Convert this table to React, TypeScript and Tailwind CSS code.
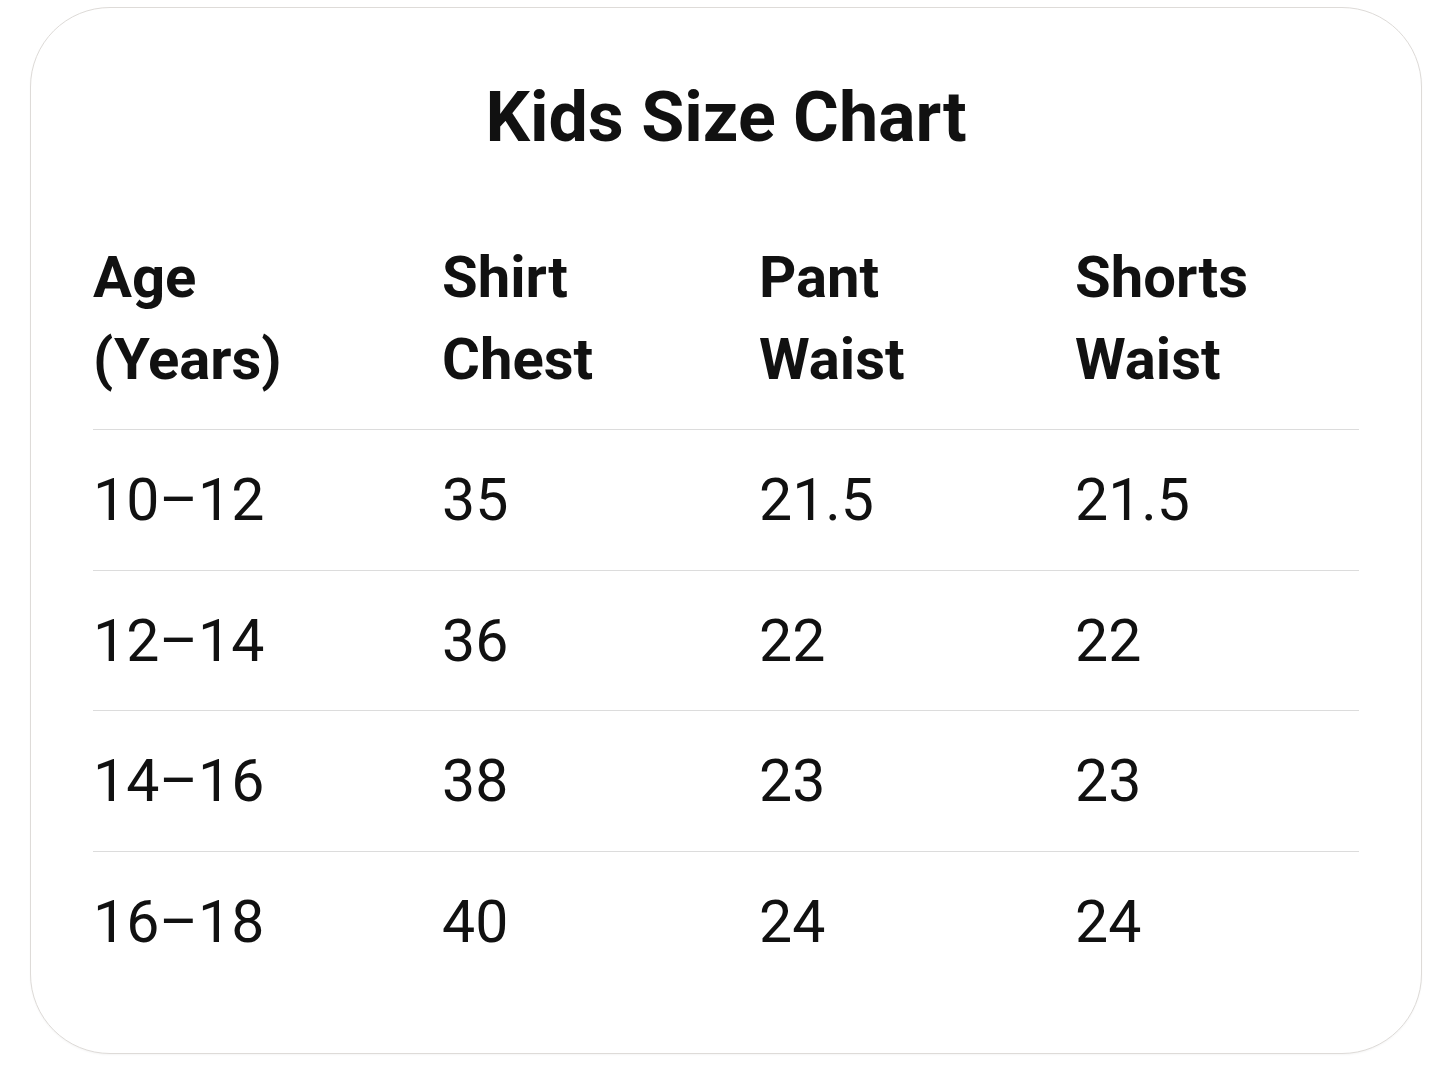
const headers: [string, string][] = [
  ['Age', '(Years)'],
  ['Shirt', 'Chest'],
  ['Pant', 'Waist'],
  ['Shorts', 'Waist'],
];

const rows: string[][] = [
  ['10–12', '35', '21.5', '21.5'],
  ['12–14', '36', '22', '22'],
  ['14–16', '38', '23', '23'],
  ['16–18', '40', '24', '24'],
];

const cols = 'grid grid-cols-[349px_317px_316px_283px]';

export default function App(): React.JSX.Element {
  return (
    <div className="min-h-screen bg-white pt-[7px] pl-[30px] font-['Roboto',sans-serif] text-[#111111]">
      <div className="h-[1047px] w-[1392px] rounded-[80px] border border-[#dedbd8] bg-white px-[62px] pt-[73px] shadow-[0_1px_2px_rgba(0,0,0,0.04)]">
        <h1 className="text-center text-[70px] leading-[72px] font-bold">Kids Size Chart</h1>
        <div className={`${cols} mt-[83px] border-b border-[#dcdcdc] pb-[29px]`}>
          {headers.map(([a, b]) => (
            <div key={a + b} className="text-[58px] leading-[82px] font-bold">
              <div>{a}</div>
              <div>{b}</div>
            </div>
          ))}
        </div>
        {rows.map((r, i) => (
          <div
            key={r[0]}
            className={`${cols} h-[140.6px] ${i < rows.length - 1 ? 'border-b border-[#dcdcdc]' : ''}`}
          >
            {r.map((c, j) => (
              <div key={j} className="text-[59px] leading-[139px]">
                {c}
              </div>
            ))}
          </div>
        ))}
      </div>
    </div>
  );
}
